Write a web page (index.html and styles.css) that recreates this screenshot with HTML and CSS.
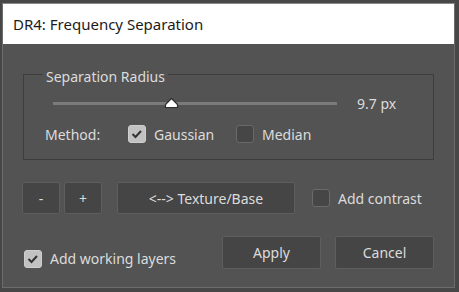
FILE: index.html
```html
<!DOCTYPE html>
<html lang="en">
<head>
    <meta charset="UTF-8">
    <title>DR4: Frequency Separation</title>
    <link rel="stylesheet" href="styles.css">
</head>
<body>
    <div class="dialog">
        <div class="titlebar">DR4: Frequency Separation</div>

        <div class="content">
            <fieldset class="group">
                <legend>Separation Radius</legend>
                <div class="slider-row">
                    <div class="slider">
                        <div class="track"></div>
                        <svg class="thumb" width="15" height="12" viewBox="0 0 15 12">
                            <path d="M1.5 10.5 L1.5 7.5 L7.5 1.5 L13.5 7.5 L13.5 10.5 Z" fill="#fff" stroke="#2e2e2e" stroke-width="1.2" stroke-linejoin="round"/>
                        </svg>
                    </div>
                    <span class="value">9.7 px</span>
                </div>
                <div class="method-row">
                    <span class="method-label">Method:</span>
                    <label class="check checked gaussian">
                        <span class="box"><svg width="18" height="18" viewBox="0 0 18 18"><path d="M4.5 9 L7.5 12 L13 6" fill="none" stroke="#333" stroke-width="2"/></svg></span>
                        Gaussian
                    </label>
                    <label class="check">
                        <span class="box"></span>
                        Median
                    </label>
                </div>
            </fieldset>

            <div class="tools-row">
                <button class="btn small">-</button>
                <button class="btn small">+</button>
                <button class="btn swap">&lt;--&gt; Texture/Base</button>
                <label class="check contrast">
                    <span class="box"></span>
                    Add contrast
                </label>
            </div>

            <div class="footer-row">
                <label class="check checked layers">
                    <span class="box"><svg width="18" height="18" viewBox="0 0 18 18"><path d="M4.5 9 L7.5 12 L13 6" fill="none" stroke="#333" stroke-width="2"/></svg></span>
                    Add working layers
                </label>
                <button class="btn action">Apply</button>
                <button class="btn action">Cancel</button>
            </div>
        </div>
    </div>
</body>
</html>
```

FILE: styles.css
```css
* {
    margin: 0;
    padding: 0;
    box-sizing: border-box;
    font-family: 'Noto Sans', 'Open Sans', sans-serif;
}

body {
    background-color: #474747;
    width: 459px;
    height: 292px;
    overflow: hidden;
}

.dialog {
    margin: 3px 0 0 2px;
    width: 453px;
    height: 285px;
    background-color: #535353;
    border: 1px solid #6c6c6c;
    border-top-color: #8a8a8a;
}

.titlebar {
    height: 40px;
    background: #fff;
    color: #1b1b1b;
    font-size: 15px;
    line-height: 40px;
    padding-left: 10px;
}

.content {
    padding: 19px 20px 0 19px;
    color: #dcdcdc;
    font-size: 14px;
}

/* Groupe */
.group {
    border: 1px solid #3d3d3d;
    margin-left: 1px;
    padding: 0 0 16px 21px;
}

.group legend {
    margin-left: -2px;
    padding: 6px 3px 0;
    line-height: 16px;
    color: #dcdcdc;
}

.slider-row {
    display: flex;
    align-items: center;
    height: 20px;
    margin-top: 8px;
}

.slider {
    position: relative;
    width: 284px;
    height: 20px;
    margin-left: 8px;
}

.track {
    position: absolute;
    left: 0;
    right: 0;
    top: 9px;
    height: 3px;
    background: #7b7b7b;
}

.thumb {
    position: absolute;
    left: 111px;
    top: 4px;
}

.value {
    margin-left: 20px;
}

.method-row {
    display: flex;
    align-items: center;
    height: 18px;
    margin-top: 12px;
}

.method-label {
    width: 83px;
}

/* Cases à cocher */
.check {
    display: flex;
    align-items: center;
    gap: 8px;
}

.check .box {
    width: 18px;
    height: 18px;
    border-radius: 3px;
    background: #464646;
    border: 1px solid #6a6a6a;
}

.check.checked .box {
    background: #c2c2c2;
    border-color: #cfcfcf;
}

.check .box svg {
    display: block;
    margin: -1px;
}

.gaussian {
    width: 108px;
}

/* Boutons */
.btn {
    background-color: #454545;
    color: #dcdcdc;
    border: 1px solid #5e5e5e;
    border-radius: 2px;
    font-size: 14px;
    height: 32px;
}

.tools-row {
    display: flex;
    align-items: center;
    margin-top: 22px;
}

.btn.small {
    width: 38px;
    margin-right: 4px;
}

.btn.swap {
    width: 178px;
    margin-left: 11px;
}

.contrast {
    margin-left: 17px;
}

.footer-row {
    display: flex;
    align-items: flex-start;
    margin-top: 22px;
}

.layers {
    margin: 13px 0 0 2px;
    width: 198px;
}

.btn.action {
    width: 99px;
    height: 33px;
    margin-right: 14px;
}

.btn.action:last-child {
    margin-right: 0;
}
```
